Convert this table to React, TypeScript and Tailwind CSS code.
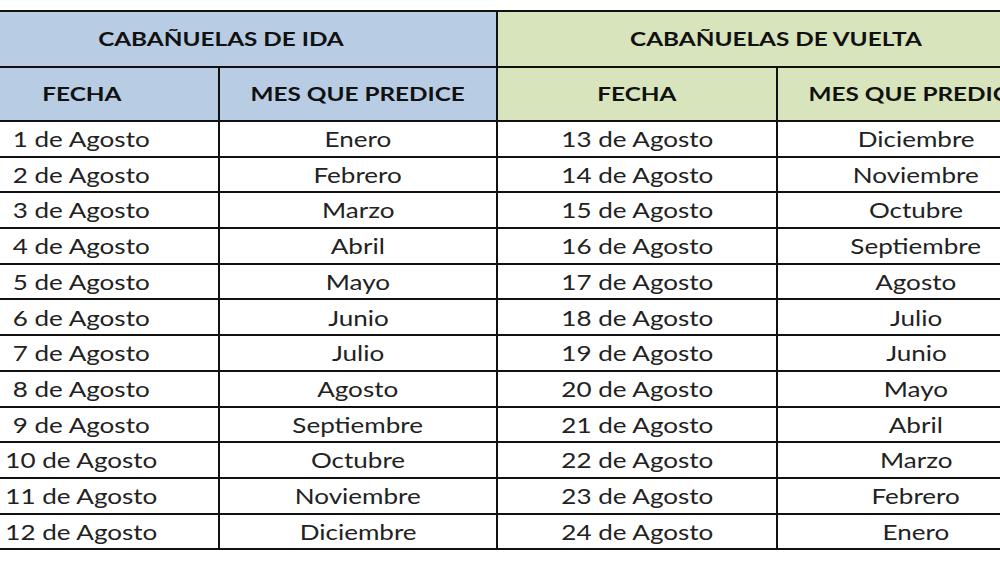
const ida = [
  ["1 de Agosto", "Enero"],
  ["2 de Agosto", "Febrero"],
  ["3 de Agosto", "Marzo"],
  ["4 de Agosto", "Abril"],
  ["5 de Agosto", "Mayo"],
  ["6 de Agosto", "Junio"],
  ["7 de Agosto", "Julio"],
  ["8 de Agosto", "Agosto"],
  ["9 de Agosto", "Septiembre"],
  ["10 de Agosto", "Octubre"],
  ["11 de Agosto", "Noviembre"],
  ["12 de Agosto", "Diciembre"],
];

const vuelta = [
  ["13 de Agosto", "Diciembre"],
  ["14 de Agosto", "Noviembre"],
  ["15 de Agosto", "Octubre"],
  ["16 de Agosto", "Septiembre"],
  ["17 de Agosto", "Agosto"],
  ["18 de Agosto", "Julio"],
  ["19 de Agosto", "Junio"],
  ["20 de Agosto", "Mayo"],
  ["21 de Agosto", "Abril"],
  ["22 de Agosto", "Marzo"],
  ["23 de Agosto", "Febrero"],
  ["24 de Agosto", "Enero"],
];

function T({ children }: { children: React.ReactNode }) {
  return <span className="inline-block scale-x-[1.24] whitespace-nowrap">{children}</span>;
}

function H({ children }: { children: React.ReactNode }) {
  return <span className="inline-block scale-x-[1.28] whitespace-nowrap">{children}</span>;
}

export default function App() {
  const cell = "border-2 border-[#111] text-center p-0";
  return (
    <div className="w-[1000px] h-[566px] overflow-hidden bg-white pt-[10px]" style={{ fontFamily: "Lato, 'Open Sans', sans-serif" }}>
      <table className="ml-[-57px] border-collapse table-fixed w-[1111px]">
        <colgroup>
          <col className="w-[275px]" />
          <col className="w-[278px]" />
          <col className="w-[280px]" />
          <col className="w-[278px]" />
        </colgroup>
        <thead className="font-bold text-[#111] text-[19px]">
          <tr className="h-[56px]">
            <th colSpan={2} className={`${cell} bg-[#b8cce4]`}><H>CABAÑUELAS DE IDA</H></th>
            <th colSpan={2} className={`${cell} bg-[#d8e4bc]`}><H>CABAÑUELAS DE VUELTA</H></th>
          </tr>
          <tr className="h-[54px]">
            <th className={`${cell} bg-[#b8cce4]`}><H>FECHA</H></th>
            <th className={`${cell} bg-[#b8cce4]`}><H>MES QUE PREDICE</H></th>
            <th className={`${cell} bg-[#d8e4bc]`}><H>FECHA</H></th>
            <th className={`${cell} bg-[#d8e4bc]`}><H>MES QUE PREDICE</H></th>
          </tr>
        </thead>
        <tbody className="text-[21px] text-[#222]">
          {ida.map((r, i) => (
            <tr key={r[0]} className="h-[35.7px]">
              <td className={cell}><T>{r[0]}</T></td>
              <td className={cell}><T>{r[1]}</T></td>
              <td className={cell}><T>{vuelta[i][0]}</T></td>
              <td className={cell}><T>{vuelta[i][1]}</T></td>
            </tr>
          ))}
        </tbody>
      </table>
    </div>
  );
}
